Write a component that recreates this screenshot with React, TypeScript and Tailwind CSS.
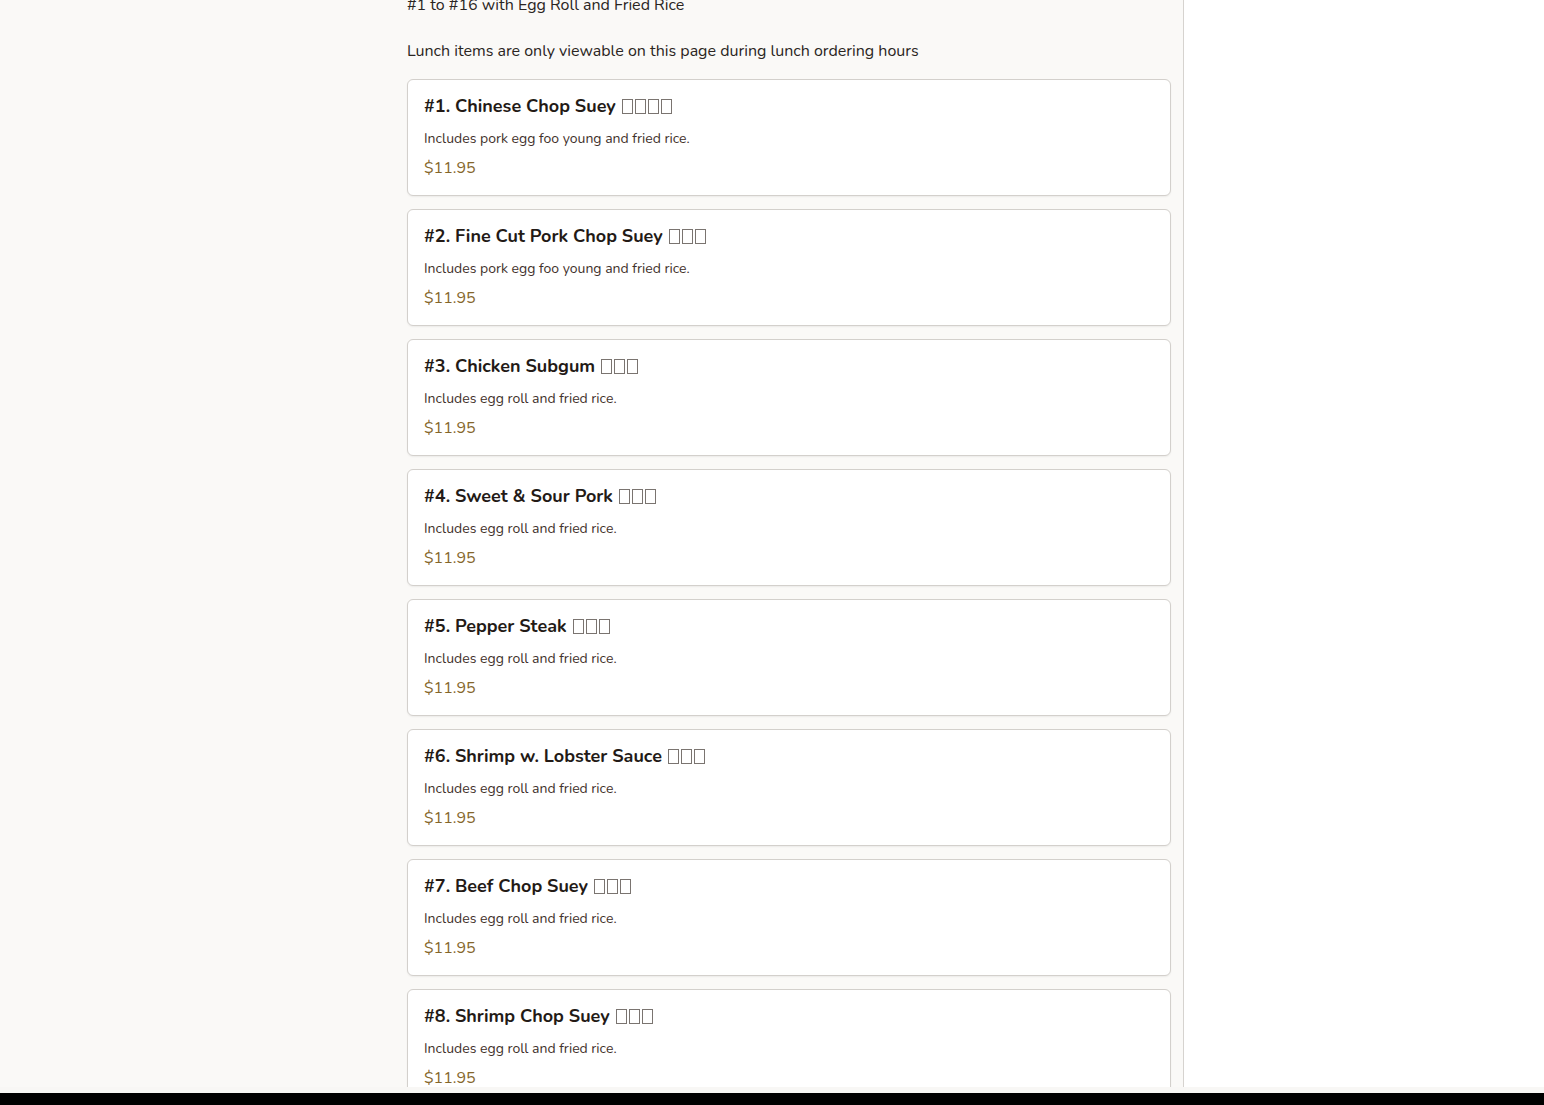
import React from 'react'

interface Item {
  num: number
  name: string
  boxes: number
  desc: string
  price: string
}

const items: Item[] = [
  { num: 1, name: 'Chinese Chop Suey', boxes: 4, desc: 'Includes pork egg foo young and fried rice.', price: '$11.95' },
  { num: 2, name: 'Fine Cut Pork Chop Suey', boxes: 3, desc: 'Includes pork egg foo young and fried rice.', price: '$11.95' },
  { num: 3, name: 'Chicken Subgum', boxes: 3, desc: 'Includes egg roll and fried rice.', price: '$11.95' },
  { num: 4, name: 'Sweet & Sour Pork', boxes: 3, desc: 'Includes egg roll and fried rice.', price: '$11.95' },
  { num: 5, name: 'Pepper Steak', boxes: 3, desc: 'Includes egg roll and fried rice.', price: '$11.95' },
  { num: 6, name: 'Shrimp w. Lobster Sauce', boxes: 3, desc: 'Includes egg roll and fried rice.', price: '$11.95' },
  { num: 7, name: 'Beef Chop Suey', boxes: 3, desc: 'Includes egg roll and fried rice.', price: '$11.95' },
  { num: 8, name: 'Shrimp Chop Suey', boxes: 3, desc: 'Includes egg roll and fried rice.', price: '$11.95' },
]

// the chinese names show up as missing-glyph boxes in the original
function Tofu({ count }: { count: number }) {
  return (
    <span className="inline-flex gap-[2px] ml-[6px] align-[-2px]">
      {Array.from({ length: count }).map((_, i) => (
        <span key={i} className="inline-block w-[11px] h-[15px] border border-[#7a7470]" />
      ))}
    </span>
  )
}

function MenuCard({ item }: { item: Item }) {
  return (
    <div className="bg-white border border-[#d3d0cc] rounded-[6px] shadow-[0_1px_2px_rgba(0,0,0,0.06)] px-4 pt-[14px] pb-[15px]">
      <h3 className="text-[18px] leading-6 font-bold text-[#231a16]">
        #{item.num}. {item.name}
        <Tofu count={item.boxes} />
      </h3>
      <p className="mt-[11px] text-[14px] leading-5 text-[#3f312b]">{item.desc}</p>
      <p className="mt-[7px] text-[16px] leading-6 text-[#85662a]">{item.price}</p>
    </div>
  )
}

export default function App() {
  return (
    <div className="h-screen overflow-hidden flex flex-col bg-white" style={{ fontFamily: '"Nunito", "Noto Sans", sans-serif' }}>
      <div className="flex h-[1087px] overflow-hidden">
        <div className="w-[1184px] shrink-0 bg-[#faf9f7] border-r border-[#d6d3cf] pl-[407px] pr-[12px]">
          <p className="-mt-[7px] text-[16px] leading-6 text-[#2a2522]">#1 to #16 with Egg Roll and Fried Rice</p>
          <p className="mt-[22px] text-[16px] leading-6 text-[#2a2522]">Lunch items are only viewable on this page during lunch ordering hours</p>
          <div className="mt-[16px] flex flex-col gap-[13px]">
            {items.map((it) => (
              <MenuCard key={it.num} item={it} />
            ))}
          </div>
        </div>
        <div className="flex-1 bg-white" />
      </div>
      <div className="h-[6px] bg-[#f8f7f5]" />
      <div className="flex-1 bg-black" />
    </div>
  )
}
